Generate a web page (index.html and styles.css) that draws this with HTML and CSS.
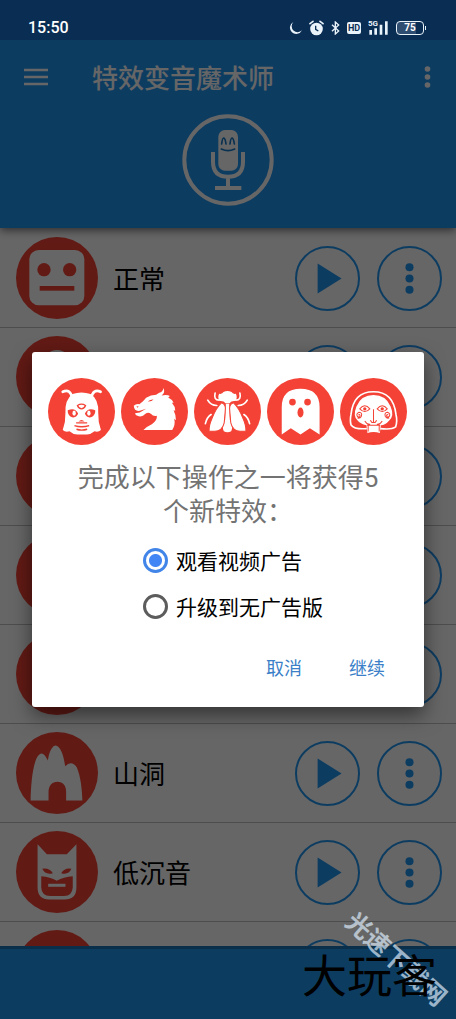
FILE: index.html
```html
<!DOCTYPE html>
<html lang="zh-CN">
  <head>
    <meta charset="UTF-8" />
    <meta name="viewport" content="width=device-width, initial-scale=1.0" />
    <title>特效变音魔术师</title>
    <link rel="stylesheet" href="styles.css">
  </head>
  <body>
    <!-- Shared icons -->
    <svg class="icon-defs" aria-hidden="true">
      <symbol id="icon-play" viewBox="0 0 65 65">
        <path d="M22 16.500 L47.500 32.500 L22 48.500 Z" fill="currentColor" />
      </symbol>
      <symbol id="icon-dots" viewBox="0 0 65 65">
        <g fill="currentColor">
          <circle cx="32.500" cy="20.500" r="4.300" />
          <circle cx="32.500" cy="32.500" r="4.300" />
          <circle cx="32.500" cy="44.500" r="4.300" />
        </g>
      </symbol>
    </svg>

    <div class="status-bar">
      <span class="time">15:50</span>
      <div class="status-icons">
        <svg width="13" height="14" viewBox="0 0 39 42"><path d="M13 3 A19 19 0 1 0 39 28 A17 17 0 0 1 13 3Z" fill="#eaf2fa" /></svg>
        <svg width="15" height="16" viewBox="0 0 45 48">
          <circle cx="22.500" cy="27" r="19" fill="#eaf2fa" />
          <path d="M3 11 L12 4 M42 11 L33 4" stroke="#eaf2fa" stroke-width="5" stroke-linecap="round" />
          <path d="M20 17 V28 L28 33" fill="none" stroke="#0a2f54" stroke-width="4" />
        </svg>
        <svg width="9" height="14" viewBox="0 0 27 42"><path d="M3 11 L23 30 L13 39 V3 L23 12 L3 31" fill="none" stroke="#eaf2fa" stroke-width="4" /></svg>
        <span class="hd">HD</span>
        <svg width="21" height="15" viewBox="0 0 63 45">
          <path d="M8 44 V30 M23 44 V25 M39 44 V14 M55 44 V4" stroke="#eaf2fa" stroke-width="8" />
          <text class="network" x="0" y="19">5G</text>
        </svg>
        <span class="battery">75</span>
      </div>
    </div>

    <header class="header">
      <div class="toolbar">
        <button type="button" class="bar-button" aria-label="菜单">
          <svg width="24" height="18" viewBox="0 0 24 18"><path d="M0 2 H24 M0 9 H24 M0 16 H24" stroke="currentColor" stroke-width="2.500" /></svg>
        </button>
        <h1>特效变音魔术师</h1>
        <button type="button" class="bar-button" aria-label="更多">
          <svg width="7" height="22" viewBox="0 0 7 22" fill="currentColor"><circle cx="3.500" cy="3" r="2.800" /><circle cx="3.500" cy="11" r="2.800" /><circle cx="3.500" cy="19" r="2.800" /></svg>
        </button>
      </div>
      <button type="button" class="record-button" aria-label="录音">
        <svg width="92" height="92" viewBox="66 42 276 276">
          <circle cx="204" cy="180" r="131" fill="none" stroke="currentColor" stroke-width="12" />
          <rect x="175" y="90" width="59" height="122" rx="20" fill="currentColor" />
          <path d="M159 156 V185 Q159 230 204 230 Q249 230 249 185 V156 M204 230 V262 M165 264 H244" fill="none" stroke="currentColor" stroke-width="12" />
          <path d="M185 132 Q187 114 191 114 Q196 115 198 132 M210 132 Q212 114 216 114 Q221 115 223 132 M184 147 Q204 157 224 147" fill="none" stroke="#1478c8" stroke-width="5" stroke-linecap="round" />
        </svg>
      </button>
    </header>

    <!-- Effect list -->
    <ul class="effects">
      <li class="effect">
        <svg class="effect-icon" viewBox="47 33 246 246">
          <rect x="87" y="72" width="165" height="166" rx="28" fill="#fff" />
          <g fill="#f44336"><circle cx="131" cy="131" r="20" /><circle cx="208" cy="131" r="20" /><rect x="118" y="180" width="104" height="14" /></g>
        </svg>
        <span class="effect-name">正常</span>
        <button type="button" class="round-button" aria-label="播放"><svg><use href="#icon-play" /></svg></button>
        <button type="button" class="round-button" aria-label="选项"><svg><use href="#icon-dots" /></svg></button>
      </li>
      <li class="effect">
        <svg class="effect-icon" viewBox="0 0 82 82"><circle cx="41" cy="28" r="14" fill="#fff" /><path d="M17 68 Q17 46 41 46 Q65 46 65 68Z" fill="#fff" /></svg>
        <span class="effect-name"></span>
        <button type="button" class="round-button" aria-label="播放"><svg><use href="#icon-play" /></svg></button>
        <button type="button" class="round-button" aria-label="选项"><svg><use href="#icon-dots" /></svg></button>
      </li>
      <li class="effect">
        <svg class="effect-icon" viewBox="0 0 82 82"></svg>
        <span class="effect-name"></span>
        <button type="button" class="round-button" aria-label="播放"><svg><use href="#icon-play" /></svg></button>
        <button type="button" class="round-button" aria-label="选项"><svg><use href="#icon-dots" /></svg></button>
      </li>
      <li class="effect">
        <svg class="effect-icon" viewBox="0 0 82 82"></svg>
        <span class="effect-name"></span>
        <button type="button" class="round-button" aria-label="播放"><svg><use href="#icon-play" /></svg></button>
        <button type="button" class="round-button" aria-label="选项"><svg><use href="#icon-dots" /></svg></button>
      </li>
      <li class="effect">
        <svg class="effect-icon" viewBox="0 0 82 82"></svg>
        <span class="effect-name"></span>
        <button type="button" class="round-button" aria-label="播放"><svg><use href="#icon-play" /></svg></button>
        <button type="button" class="round-button" aria-label="选项"><svg><use href="#icon-dots" /></svg></button>
      </li>
      <li class="effect">
        <svg class="effect-icon" viewBox="47 276 247 247">
          <path d="M91 482 C92 430 98 365 115 346 Q128 330 143 362 C148 330 158 317 167 317 C182 322 190 345 195 379 Q214 360 230 382 C242 410 246 450 247 482 H198 V455 C198 438 188 426 172 426 C155 426 146 438 145 455 V482Z" fill="#fff" />
        </svg>
        <span class="effect-name">山洞</span>
        <button type="button" class="round-button" aria-label="播放"><svg><use href="#icon-play" /></svg></button>
        <button type="button" class="round-button" aria-label="选项"><svg><use href="#icon-dots" /></svg></button>
      </li>
      <li class="effect">
        <svg class="effect-icon" viewBox="47 18 247 247">
          <path d="M112 58 L140 88 H200 L229 58 V188 Q229 224 193 224 H148 Q112 224 112 188Z" fill="#fff" />
          <g fill="#f44336">
            <path d="M123 154 Q150 156 170 168 Q190 156 218 154 V188 Q216 213 192 214 H150 Q124 213 123 188Z" />
            <path d="M126 132 Q147 128 158 145 Q136 152 126 132Z M214 132 Q194 128 183 145 Q205 152 214 132Z" />
          </g>
          <rect x="144" y="177" width="52" height="9" fill="#fff" />
        </svg>
        <span class="effect-name">低沉音</span>
        <button type="button" class="round-button" aria-label="播放"><svg><use href="#icon-play" /></svg></button>
        <button type="button" class="round-button" aria-label="选项"><svg><use href="#icon-dots" /></svg></button>
      </li>
      <li class="effect">
        <svg class="effect-icon" viewBox="0 0 82 82"></svg>
        <span class="effect-name"></span>
        <button type="button" class="round-button" aria-label="播放"><svg><use href="#icon-play" /></svg></button>
        <button type="button" class="round-button" aria-label="选项"><svg><use href="#icon-dots" /></svg></button>
      </li>
    </ul>

    <footer class="bottom-bar"></footer>

    <!-- Unlock dialog -->
    <div class="overlay">
      <form class="dialog" role="dialog" aria-labelledby="dialog-text">
        <div class="new-effects">
          <svg class="new-icon" viewBox="24 25 200 200">
            <path d="M97 73 Q124 64 151 73 Q176 88 174 130 Q173 155 182 180 Q174 188 163 184 Q152 193 140 194 H112 Q98 193 88 184 Q76 188 68 180 Q77 155 76 130 Q74 90 97 73Z" fill="#fff" />
            <path d="M96 84 Q91 56 68 66 M153 84 Q159 56 181 66" fill="none" stroke="#fff" stroke-width="8" stroke-linecap="round" />
            <g fill="#f44336"><path d="M83 121 Q106 112 114 132 Q106 148 91 140 Q82 133 83 121Z M165 121 Q142 112 134 132 Q142 148 157 140 Q166 133 165 121Z" /><path d="M115 155 Q124 146 133 155Z" /></g>
            <ellipse cx="102" cy="130" rx="5" ry="8" fill="#fff" /><ellipse cx="146" cy="130" rx="5" ry="8" fill="#fff" />
            <path d="M112 107 Q124 99 136 107 Q132 117 124 117 Q116 117 112 107Z M108 159 H141 M103 167 Q124 174 147 167 M109 178 Q124 183 141 178" fill="none" stroke="#f44336" stroke-width="4" />
          </svg>
          <svg class="new-icon" viewBox="245 25 200 200">
            <path d="M283 108 Q290 101 300 103 Q312 95 320 84 Q334 75 350 75 L359 69 Q370 67 372 55 Q378 69 366 77 Q383 73 391 79 L386 83 Q397 88 402 99 L397 99 Q407 110 407 123 L402 121 Q410 137 409 151 L404 147 Q408 166 398 180 H312 Q320 171 337 163 Q354 152 352 138 Q342 141 334 132 Q326 126 318 132 Q308 143 294 138 Q288 136 287 130 L301 128 L320 117 L301 123 Q285 126 283 108Z" fill="#fff" />
            <path d="M325 95 Q333 88 342 89 Q337 96 325 95Z M291 109 L298 110 L294 114Z" fill="#f44336" />
          </svg>
          <svg class="new-icon" viewBox="28 25 200 200">
            <path d="M103 72 Q112 74 116 67 Q128 61 140 67 Q144 74 153 72 Q159 84 151 94 Q139 93 134 100 H122 Q117 93 105 94 Q97 84 103 72Z" fill="#fff" />
            <path d="M123 102 H133 L135 150 Q146 174 139 184 Q128 190 117 184 Q110 174 121 150Z" fill="#fff" />
            <path d="M110 99 Q125 103 121 125 L118 160 Q112 184 90 184 H73 Q72 167 82 145 Q94 114 110 99Z M146 99 Q131 103 135 125 L138 160 Q144 184 166 184 H183 Q184 167 174 145 Q162 114 146 99Z" fill="#fff" stroke="#f44336" stroke-width="3" />
            <path d="M103 91 Q86 91 91 70 M96 107 Q78 107 69 91 M79 134 Q66 143 62 161 M153 91 Q170 91 165 70 M160 107 Q178 107 187 91 M177 134 Q190 143 194 161" fill="none" stroke="#fff" stroke-width="5" stroke-linecap="round" />
          </svg>
          <svg class="new-icon" viewBox="248 25 200 200">
            <path d="M292 194 V112 Q292 57 348 57 Q405 57 405 112 V194 L376 175 L348 194 L319 175Z" fill="#fff" />
            <g fill="#f44336"><circle cx="324" cy="97" r="10" /><circle cx="369" cy="97" r="10" /><ellipse cx="348" cy="128" rx="9" ry="15" /></g>
          </svg>
          <svg class="new-icon" viewBox="48 25 200 200">
            <path d="M128 176 Q91 179 81 165 Q77 153 81 133 Q88 66 148 66 Q207 66 215 133 Q220 153 214 171 Q202 180 168 176" fill="none" stroke="#fff" stroke-width="5" />
            <path d="M148 76 Q185 76 199 110 Q211 138 195 152 Q183 166 170 166 L167 189 Q148 184 130 189 L127 166 Q108 162 100 151 Q86 138 97 110 Q111 76 148 76Z" fill="#fff" />
            <g fill="none" stroke="#f44336" stroke-width="3">
              <path d="M107 117 Q122 98 137 117 Q122 133 107 117Z M159 117 Q174 98 189 117 Q174 133 159 117Z" />
              <path d="M148 118 V156 M139 151 Q142 160 148 157 Q154 160 157 151 M122 153 Q129 165 138 163 M174 153 Q167 165 158 163 M129 166 H168 M132 166 V185 M165 166 V185" />
              <path d="M103 136 q4 -4 5 1 q-1 7 -8 3 q-5 -9 5 -13 q10 1 7 12 q-5 8 -12 5 M192 136 q-4 -4 -5 1 q1 7 8 3 q5 -9 -5 -13 q-10 1 -7 12 q5 8 12 5" />
            </g>
            <g fill="#f44336"><circle cx="122" cy="117" r="5" /><circle cx="174" cy="117" r="5" /></g>
          </svg>
        </div>
        <p class="dialog-text" id="dialog-text">完成以下操作之一将获得5个新特效：</p>
        <div class="options">
          <label class="option"><input type="radio" name="unlock" value="video" checked />观看视频广告</label>
          <label class="option"><input type="radio" name="unlock" value="upgrade" />升级到无广告版</label>
        </div>
        <div class="actions">
          <button type="button">取消</button>
          <button type="button">继续</button>
        </div>
      </form>
    </div>

    <div class="site-mark">光速下载网</div>
    <div class="brand-mark">大玩客</div>
  </body>
</html>
```

FILE: styles.css
```css
* {
  box-sizing: border-box;
}
body {
  position: relative;
  display: flex;
  flex-direction: column;
  height: 100vh;
  margin: 0;
  overflow: hidden;
  background-color: #fff;
  color: #000;
  font-family: Roboto, "Noto Sans CJK SC", sans-serif;
}
button {
  padding: 0;
  border: none;
  background: none;
  color: inherit;
  font-family: inherit;
  cursor: pointer;
}
svg {
  display: block;
}
.icon-defs {
  position: absolute;
  width: 0;
  height: 0;
}

/* Status bar */
.status-bar {
  position: relative;
  z-index: 3;
  display: flex;
  flex-shrink: 0;
  align-items: center;
  justify-content: space-between;
  height: 40px;
  padding: 15px 32px 0 28px;
  background-color: #0a2d53;
  color: #fff;
}
.time {
  font-size: 16px;
  font-weight: 500;
}
.status-icons {
  display: flex;
  align-items: center;
  gap: 7px;
}
.hd {
  width: 14px;
  border-radius: 2px;
  background-color: #eaf2fa;
  color: #0a2d53;
  font-size: 9px;
  font-weight: 700;
  line-height: 12px;
  text-align: center;
}
.network {
  fill: #eaf2fa;
  font-size: 24px;
  font-weight: 700;
}
.battery {
  position: relative;
  width: 28px;
  border: 1px solid #eaf2fa;
  border-radius: 4px;
  background: linear-gradient(to right, #2f4d70 75%, transparent 75%);
  font-size: 10px;
  font-weight: 700;
  line-height: 12px;
  text-align: center;
}
.battery::after {
  content: "";
  position: absolute;
  top: 4px;
  right: -3px;
  width: 1px;
  height: 4px;
  background-color: #eaf2fa;
}

/* Header */
.header {
  position: relative;
  z-index: 1;
  flex-shrink: 0;
  height: 188px;
  background-color: #2196f3;
  box-shadow: 0 2px 9px rgba(0, 0, 0, 0.6);
  color: #fff;
}
.toolbar {
  display: flex;
  align-items: center;
  height: 74px;
  padding: 0 25px 0 24px;
}
.toolbar h1 {
  flex: 1;
  margin: 0 0 0 44px;
  padding-top: 3px;
  font-size: 26px;
  font-weight: 500;
  line-height: 34px;
}
.record-button {
  display: block;
  margin: 0 auto;
}

/* Effect list */
.effects {
  flex: 1;
  min-height: 0;
  margin: 0;
  padding: 1px 0 0;
  overflow: hidden;
  list-style: none;
}
.effect {
  display: flex;
  align-items: center;
  height: 99px;
  padding: 0 14px 0 16px;
  border-bottom: 1px solid #c0c0c0;
}
.effect-icon {
  flex-shrink: 0;
  width: 82px;
  height: 82px;
  border-radius: 50%;
  background-color: #f44336;
}
.effect-name {
  flex: 1;
  margin-left: 15px;
  padding-top: 4px;
  font-size: 26px;
  line-height: 34px;
}
.round-button {
  width: 65px;
  height: 65px;
  margin-left: 17px;
  border: 2px solid #2196f3;
  border-radius: 50%;
  color: #2196f3;
}
.round-button svg {
  width: 100%;
  height: 100%;
}
.bottom-bar {
  flex-shrink: 0;
  height: 73px;
  border-top: 3px solid #1976b8;
  background-color: #2196f3;
}

/* Dialog */
.overlay {
  position: absolute;
  inset: 0;
  z-index: 2;
  display: flex;
  align-items: center;
  padding: 40px 32px 0;
  background-color: rgba(0, 0, 0, 0.6);
}
.dialog {
  flex: 1;
  padding: 26px 16px 16px;
  border-radius: 3px;
  background-color: #fff;
  box-shadow: 0 8px 20px rgba(0, 0, 0, 0.5);
}
.new-effects {
  display: flex;
  gap: 6px;
}
.new-icon {
  width: 67px;
  height: 67px;
  border-radius: 50%;
  background-color: #f44336;
}
.dialog-text {
  margin: 16px 24px 8px;
  color: #737373;
  font-size: 26px;
  line-height: 34px;
  text-align: center;
}
.options {
  width: fit-content;
  margin: 0 auto;
  padding-left: 10px;
}
.option {
  display: flex;
  align-items: center;
  gap: 8px;
  height: 46px;
  font-size: 21px;
}
.option input {
  appearance: none;
  width: 25px;
  height: 25px;
  margin: 0;
  border: 3px solid #5c5c5c;
  border-radius: 50%;
}
.option input:checked {
  border-color: #4285e8;
  background: radial-gradient(circle, #4285f4 6px, transparent 7px);
}
.actions {
  display: flex;
  justify-content: flex-end;
  gap: 15px;
  margin-top: 14px;
  padding-right: 7px;
}
.actions button {
  height: 48px;
  padding: 0 16px;
  color: #3a7fc8;
  font-size: 18px;
}

/* Marks over the bottom corner */
.site-mark,
.brand-mark {
  position: absolute;
  z-index: 4;
  white-space: nowrap;
}
.site-mark {
  right: -2px;
  bottom: 42px;
  color: rgba(220, 235, 250, 0.7);
  font-size: 25px;
  font-weight: 700;
  line-height: 34px;
  transform: rotate(42deg);
}
.brand-mark {
  right: 19px;
  bottom: 16px;
  font-size: 45px;
  line-height: 50px;
}
```
